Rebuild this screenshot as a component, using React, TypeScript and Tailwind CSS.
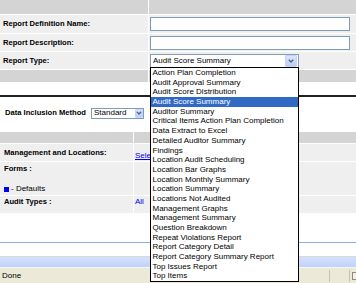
const items = [
  "Action Plan Completion",
  "Audit Approval Summary",
  "Audit Score Distribution",
  "Audit Score Summary",
  "Auditor Summary",
  "Critical Items Action Plan Completion",
  "Data Extract to Excel",
  "Detailed Auditor Summary",
  "Findings",
  "Location Audit Scheduling",
  "Location Bar Graphs",
  "Location Monthly Summary",
  "Location Summary",
  "Locations Not Audited",
  "Management Graphs",
  "Management Summary",
  "Question Breakdown",
  "Repeat Violations Report",
  "Report Category Detail",
  "Report Category Summary Report",
  "Top Issues Report",
  "Top Items",
];

function ArrowBtn({ big }: { big?: boolean }) {
  return (
    <div
      className={
        big
          ? "w-[12px] h-[12px] rounded-[1px] border border-[#c3d3fd] bg-gradient-to-b from-[#dbe6fe] to-[#b9cdf8] flex items-center justify-center"
          : "w-[8px] h-[9px] rounded-[1px] border border-[#c3d3fd] bg-gradient-to-b from-[#dbe6fe] to-[#b9cdf8] flex items-center justify-center"
      }
    >
      <svg width="6" height="4" viewBox="0 0 6 4">
        <polyline points="0.8,0.8 3,3 5.2,0.8" fill="none" stroke="#4d6185" strokeWidth="1.3" />
      </svg>
    </div>
  );
}

export default function App() {
  return (
    <div className="relative w-[356px] h-[283px] overflow-hidden bg-white text-black font-['Liberation_Sans',Arial,sans-serif] flex flex-col">
      {/* Table 1 */}
      <div className="flex flex-col gap-px">
        <div className="flex gap-px h-[14px]">
          <div className="w-[148px] bg-[#d4d4d4]" />
          <div className="flex-1 bg-[#d4d4d4]" />
        </div>
        <div className="flex gap-px h-[18px]">
          <div className="w-[148px] bg-[#efefef] flex items-center pl-[3px] text-[7.6px] font-bold leading-none">
            Report Definition Name:
          </div>
          <div className="flex-1 bg-[#efefef] flex items-center pl-px">
            <div className="w-[200px] h-[14px] border border-[#7f9db9] bg-white" />
          </div>
        </div>
        <div className="flex gap-px h-[17px]">
          <div className="w-[148px] bg-[#efefef] flex items-center pl-[3px] text-[7.6px] font-bold leading-none">
            Report Description:
          </div>
          <div className="flex-1 bg-[#efefef] flex items-center pl-px">
            <div className="w-[200px] h-[14px] border border-[#7f9db9] bg-white" />
          </div>
        </div>
        <div className="flex gap-px h-[17px]">
          <div className="w-[148px] bg-[#efefef] flex items-center pl-[3px] text-[7.6px] font-bold leading-none">
            Report Type:
          </div>
          <div className="flex-1 bg-[#efefef] flex items-center pl-px">
            <div className="w-[149px] h-[14px] border border-[#7f9db9] bg-white flex items-center justify-between pl-[2px] pr-px">
              <span className="text-[8px] leading-none">Audit Score Summary</span>
              <ArrowBtn big />
            </div>
          </div>
        </div>
        <div className="flex gap-px h-[12px]">
          <div className="w-[148px] bg-[#d4d4d4]" />
          <div className="flex-1 bg-[#d4d4d4]" />
        </div>
      </div>

      <div className="h-[13px]" />
      <div className="h-[2px] bg-[#222]" />

      <div className="h-[32px] flex items-center pl-[5px] gap-[5px]">
        <span className="text-[7.6px] font-bold leading-none">Data Inclusion Method</span>
        <div className="w-[53px] h-[11px] border border-[#7f9db9] bg-white flex items-center justify-between pl-[2px] pr-0">
          <span className="text-[8px] leading-none">Standard</span>
          <ArrowBtn />
        </div>
      </div>
      <div className="h-[3px]" />

      {/* Table 2 */}
      <div className="flex flex-col gap-px">
        <div className="flex gap-px h-[11px]">
          <div className="w-[133px] bg-[#d4d4d4]" />
          <div className="flex-1 bg-[#d4d4d4]" />
        </div>
        <div className="flex gap-px h-[17px]">
          <div className="w-[133px] bg-[#efefef] flex items-center pl-[4px] text-[7.6px] font-bold leading-none">
            Management and Locations:
          </div>
          <div className="flex-1 bg-[#efefef] flex items-center pl-px">
            <div className="w-[15px] overflow-hidden whitespace-nowrap">
              <span className="text-[8px] leading-none text-[#0000ee] underline">Select...</span>
            </div>
          </div>
        </div>
        <div className="flex gap-px h-[33px]">
          <div className="w-[133px] bg-[#efefef] flex flex-col pl-[4px] pt-[2px]">
            <div className="h-[10px] flex items-center text-[7.6px] font-bold leading-none">Forms :</div>
            <div className="h-[10px]" />
            <div className="h-[10px] flex items-center gap-[2px] text-[8px] leading-none">
              <span className="w-[5px] h-[5px] bg-[#0000ff] inline-block" />
              <span>- Defaults</span>
            </div>
          </div>
          <div className="flex-1 bg-[#efefef]" />
        </div>
        <div className="flex gap-px h-[17px]">
          <div className="w-[133px] bg-[#efefef] flex items-start pl-[4px] pt-[1px]">
            <div className="h-[10px] flex items-center text-[7.6px] font-bold leading-none">Audit Types :</div>
          </div>
          <div className="flex-1 bg-[#efefef] flex items-start pl-px pt-[1px]">
            <div className="h-[10px] flex items-center text-[8px] leading-none text-[#0000ee]">All</div>
          </div>
        </div>
      </div>

      <div className="flex-1" />

      {/* Bottom chrome */}
      <div className="h-px bg-[#8cafe2]" />
      <div className="h-[13px] bg-white" />
      <div className="h-px bg-[#d8d8d8]" />
      <div className="h-[10px] bg-gradient-to-b from-[#d6e2fc] to-[#bfd2fa]" />
      <div className="h-px bg-[#f7f6f0]" />
      <div className="h-[15px] bg-[#ece9d8] flex items-center">
        <span className="pl-[2px] text-[8px] leading-none flex-1">Done</span>
        <div className="w-px h-[12px] bg-[#c7c3b1] mr-[31px]" />
        <div className="w-px h-[12px] bg-[#c7c3b1] mr-[19px]" />
        <div className="w-px h-[12px] bg-[#c7c3b1] mr-[2px]" />
        <div className="w-[4px] h-[8px] border-l border-t border-b border-[#8a8a8a] bg-[#f4f0e0]" />
      </div>

      {/* Open dropdown list */}
      <div className="absolute left-[150px] top-[67px] w-[149px] border border-black bg-white flex flex-col">
        {items.map((t) =>
          t === "Audit Score Summary" ? (
            <div key={t} className="h-[9.7px] leading-[9.7px] text-[8px] pl-[1.5px] bg-[#316ac5] text-white whitespace-nowrap">
              {t}
            </div>
          ) : (
            <div key={t} className="h-[9.7px] leading-[9.7px] text-[8px] pl-[1.5px] whitespace-nowrap">
              {t}
            </div>
          )
        )}
      </div>
    </div>
  );
}
